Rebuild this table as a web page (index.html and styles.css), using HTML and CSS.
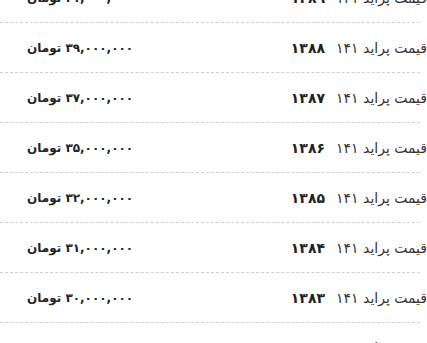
FILE: index.html
```html
<!DOCTYPE html>
<html lang="fa" dir="rtl">
<head>
<meta charset="utf-8">
<title>قیمت پراید ۱۴۱</title>
<link rel="stylesheet" href="styles.css">
</head>
<body>
<div class="list">
  <div class="row"><div class="label"><span class="model">قیمت پراید ۱۴۱</span><b class="year">۱۳۸۹</b></div><span class="price">۴۱,۰۰۰,۰۰۰ تومان</span></div>
  <div class="row"><div class="label"><span class="model">قیمت پراید ۱۴۱</span><b class="year">۱۳۸۸</b></div><span class="price">۳۹,۰۰۰,۰۰۰ تومان</span></div>
  <div class="row"><div class="label"><span class="model">قیمت پراید ۱۴۱</span><b class="year">۱۳۸۷</b></div><span class="price">۳۷,۰۰۰,۰۰۰ تومان</span></div>
  <div class="row"><div class="label"><span class="model">قیمت پراید ۱۴۱</span><b class="year">۱۳۸۶</b></div><span class="price">۳۵,۰۰۰,۰۰۰ تومان</span></div>
  <div class="row"><div class="label"><span class="model">قیمت پراید ۱۴۱</span><b class="year">۱۳۸۵</b></div><span class="price">۳۲,۰۰۰,۰۰۰ تومان</span></div>
  <div class="row"><div class="label"><span class="model">قیمت پراید ۱۴۱</span><b class="year">۱۳۸۴</b></div><span class="price">۳۱,۰۰۰,۰۰۰ تومان</span></div>
  <div class="row"><div class="label"><span class="model">قیمت پراید ۱۴۱</span><b class="year">۱۳۸۳</b></div><span class="price">۳۰,۰۰۰,۰۰۰ تومان</span></div>
  <div class="row"><div class="label"><span class="model">قیمت پراید ۱۴۱</span><b class="year">۱۳۸۲</b></div><span class="price">۲۹,۰۰۰,۰۰۰ تومان</span></div>
</div>
</body>
</html>
```
FILE: styles.css
```css
html, body {
  margin: 0;
  padding: 0;
  background: #fff;
}
body {
  font-family: "DejaVu Sans", "Noto Sans", sans-serif;
  font-size: 14px;
  color: #333;
  overflow: hidden;
}
.list {
  width: 420px;
  margin-left: 0;
  margin-right: auto;
  margin-top: -27px;
}
.row {
  display: flex;
  align-items: center;
  justify-content: space-between;
  height: 49px;
  border-bottom: 1px dashed #cfcfcf;
  padding-left: 27px;
}
.label {
  display: flex;
  align-items: center;
  gap: 11px;
  margin-right: -7px;
  white-space: nowrap;
}
.year {
  font-weight: bold;
  color: #222;
  font-size: 14px;
}
.price {
  font-weight: bold;
  color: #222;
  font-size: 12px;
  white-space: nowrap;
}
```
